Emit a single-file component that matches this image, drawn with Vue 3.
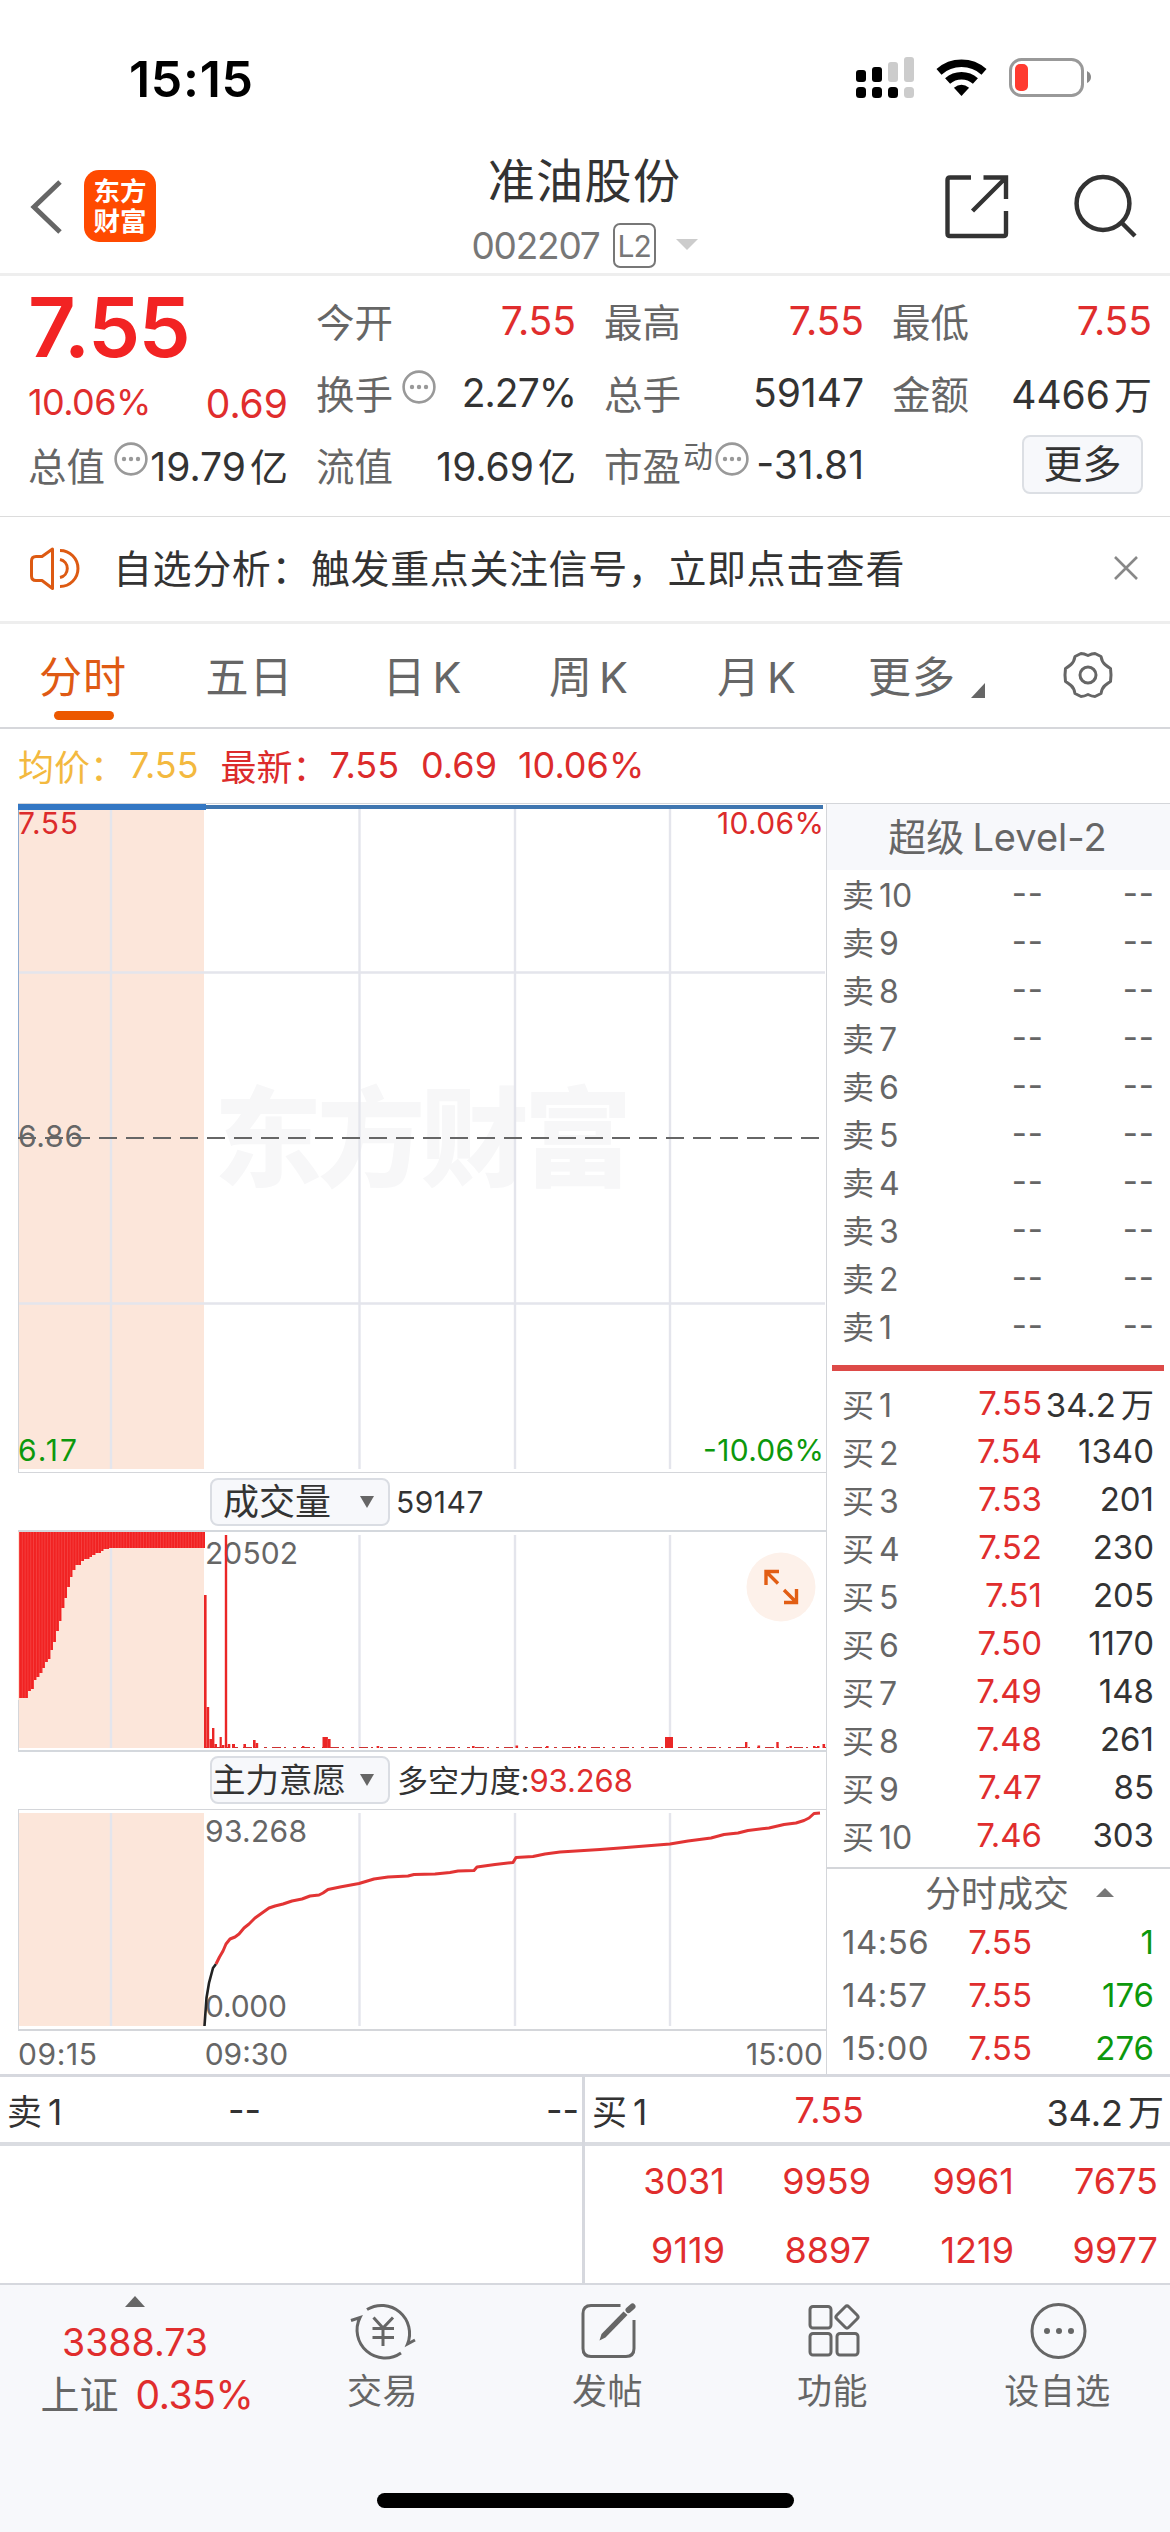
<template>
  <div class="page">
    <header class="status-bar">
      <span class="clock">15:15</span>
      <svg class="status-icons" width="240" height="50" viewBox="852 52 240 50">
        <g fill="#000">
          <rect x="856" y="70" width="10" height="12" rx="3" />
          <rect x="872" y="67" width="10" height="15" rx="3" />
          <rect x="856" y="87" width="10" height="11" rx="3.5" />
          <rect x="872" y="87" width="10" height="11" rx="3.5" />
          <rect x="888" y="87" width="10" height="11" rx="3.5" />
        </g>
        <g fill="#ccc">
          <rect x="888" y="62" width="10" height="20" rx="3" />
          <rect x="904" y="57" width="10" height="25" rx="3" />
          <rect x="904" y="87" width="10" height="11" rx="3.5" />
        </g>
        <g fill="none" stroke="#000" stroke-width="7.6">
          <path d="M939 71.8a34 34 0 0 1 45 0" />
          <path d="M947.6 81a21 21 0 0 1 27.8 0" />
        </g>
        <path d="M961.5 96l-7.6-8.2q7.6-6 15.2 0z" fill="#000" />
        <rect x="1010.5" y="59.5" width="72" height="36" rx="11" fill="none" stroke="#999" stroke-width="3" />
        <rect x="1015" y="64" width="13" height="27" rx="5" fill="#ff3b30" />
        <path d="M1087 71q4 2 4 6t-4 6z" fill="#888" />
      </svg>
    </header>

    <nav class="title-bar">
      <svg class="back" width="34" height="56" viewBox="0 0 34 56" fill="none" stroke="#666" stroke-width="5">
        <path d="M32 3L6 28l26 25" />
      </svg>
      <div class="logo"><span>东方</span><span>财富</span></div>
      <div class="title">
        <div class="stock-name">准油股份</div>
        <div class="stock-code">
          <span class="code">002207</span>
          <span class="level">L2</span>
          <svg width="22" height="12" viewBox="0 0 22 12"><path d="M0 0h22L11 11z" fill="#ccc" /></svg>
        </div>
      </div>
      <svg class="share" width="64" height="64" viewBox="0 0 64 64" fill="none" stroke="#333" stroke-width="4.4">
        <path d="M26 2.5H5Q2.5 2.5 2.5 5V58.5Q2.5 61 5 61H58.5Q61 61 61 58.5V36" />
        <path d="M38.5 2.5H61V24M61 2.5L27.500 36" />
      </svg>
      <svg class="search" width="66" height="66" viewBox="0 0 66 66" fill="none" stroke="#333" stroke-width="4.5">
        <circle cx="30" cy="29.5" r="26.4" />
        <path d="M48.5 48.5L62 62" />
      </svg>
    </nav>

    <section class="quote">
      <div class="quote-col">
        <div class="last-price">7.55</div>
        <div class="quote-row change"><span class="pct red">10.06%</span><span class="num red">0.69</span></div>
        <div class="quote-row">
          <span class="label">总值</span><DotsIcon class="dots" /><span class="num">19.79<i>亿</i></span>
        </div>
      </div>
      <div class="quote-col">
        <div class="quote-row"><span class="label">今开</span><span class="num red">7.55</span></div>
        <div class="quote-row"><span class="label">换手</span><DotsIcon class="dots" /><span class="num percent">2.27%</span></div>
        <div class="quote-row"><span class="label">流值</span><span class="num">19.69<i>亿</i></span></div>
      </div>
      <div class="quote-col">
        <div class="quote-row"><span class="label">最高</span><span class="num red">7.55</span></div>
        <div class="quote-row"><span class="label">总手</span><span class="num">59147</span></div>
        <div class="quote-row">
          <span class="label">市盈</span><span class="sup">动</span><DotsIcon class="dots tight" /><span class="num">-31.81</span>
        </div>
      </div>
      <div class="quote-col">
        <div class="quote-row"><span class="label">最低</span><span class="num red">7.55</span></div>
        <div class="quote-row"><span class="label">金额</span><span class="num">4466<i>万</i></span></div>
        <div class="quote-row end"><button class="more-btn">更多</button></div>
      </div>
    </section>

    <section class="notice">
      <svg width="54" height="46" viewBox="28 545 54 46" fill="none" stroke="#dd5a12" stroke-width="3">
        <path d="M52.5 549L42 556.5H36Q31.5 556.5 31.5 561V576Q31.5 580.5 36 580.5H42L52.5 588.5Z" stroke-linejoin="round" />
        <path d="M60 550.5a18 18 0 0 1 0 36M60 559.5a9.2 9.2 0 0 1 0 18" />
      </svg>
      <p>自选分析：触发重点关注信号，立即点击查看</p>
      <svg class="close" width="26" height="26" viewBox="0 0 26 26" stroke="#888" stroke-width="2.6">
        <path d="M2 2l22 22M24 2L2 24" />
      </svg>
    </section>

    <section class="tabs">
      <span v-for="t in tabs" :key="t" class="tab" :class="{ active: t === '分时' }">{{ t }}</span>
      <span class="tab more">更多<svg width="14" height="15" viewBox="0 0 14 15"><path d="M14 0v15H0z" fill="#666" /></svg></span>
      <span class="tab gear">
        <svg width="52" height="50" viewBox="-26 -25 52 50" fill="none" stroke="#666" stroke-width="3">
          <path d="M-7 -21.5Q-4 -21.5 0 -19.5Q4 -21.5 7 -21.5L13 -18.5Q14 -13 17 -10.5Q20 -8 22.5 -6.5Q23.500 0 22.5 6.5Q20 8 17 10.5Q14 13 13 18.5L7 21.5Q4 21.5 0 19.5Q-4 21.5 -7 21.5L-13 18.5Q-14 13 -17 10.5Q-20 8 -22.5 6.5Q-23.500 0 -22.5 -6.5Q-20 -8 -17 -10.5Q-14 -13 -13 -18.5Z" stroke-linejoin="round" />
          <circle r="8" />
        </svg>
      </span>
    </section>

    <section class="averages">
      <span class="avg">均价：</span><span class="avg v1">7.55</span>
      <span class="new">最新：</span><span class="v2">7.55</span><span class="v3">0.69</span><span>10.06%</span>
    </section>

    <main class="main">
      <div class="charts">
        <svg width="826" height="670" viewBox="0 803 826 670">
          <rect x="18" y="804" width="186" height="665" fill="#fce6da" />
          <text class="watermark" x="214" y="1178" textLength="418">东方财富</text>
          <g stroke="#e4e5ec" stroke-width="2.4">
            <path v-for="x in gridX" :key="x" :d="`M${x} 809V1469`" />
            <path d="M18 972.5H825M18 1303.5H825" />
          </g>
          <path d="M18 803.5H826M18 1472.5H826M18.5 1138V1472" stroke="#d4d6da" />
          <path d="M18.5 806V1138" stroke="#8fabd0" />
          <path d="M205 807H823" stroke="#3f76b0" stroke-width="4" />
          <path d="M18 807H206" stroke="#3377c4" stroke-width="6" />
          <path d="M18 1138H821" stroke="#666" stroke-width="2" stroke-dasharray="18 9" />
          <g class="axis">
            <text class="up" x="18" y="834" textLength="60">7.55</text>
            <text class="up" x="717" y="834" textLength="107">10.06%</text>
            <text x="18" y="1147" textLength="65">6.86</text>
            <text class="down" x="18" y="1461" textLength="59">6.17</text>
            <text class="down" x="703" y="1461" textLength="121">-10.06%</text>
          </g>
        </svg>

        <div class="sub-head">
          <button class="picker">成交量<i></i></button>
          <span class="sub-text wide">59147</span>
        </div>

        <svg width="826" height="222" viewBox="0 1530 826 222">
          <defs>
            <!-- hairline between neighbouring auction bars -->
            <pattern id="bars" x="19" width="2.82" height="10" patternUnits="userSpaceOnUse">
              <rect width="2.82" height="10" fill="#f12222" />
              <rect width="0.6" height="10" fill="#f65050" />
            </pattern>
          </defs>
          <rect x="18" y="1531" width="186" height="217" fill="#fce6da" />
          <g stroke="#e4e5ec" stroke-width="2.4">
            <path v-for="x in gridX" :key="x" :d="`M${x} 1535V1748`" />
          </g>
          <path :d="auctionPath" fill="url(#bars)" />
          <path d="M18 1531H826M18 1751H826" stroke="#d4d8dd" stroke-width="2" />
          <path d="M18.5 1700V1751" stroke="#d4d6da" />
          <path d="M206 1747.5H826" stroke="#c33" stroke-dasharray="3 5 9 3 2 7" />
          <g class="axis">
            <text x="205" y="1564" textLength="93">20502</text>
          </g>
          <rect v-for="(b, i) in volumes" :key="i" :x="b[0]" :y="b[2]" :width="b[1]" :height="1748 - b[2]" fill="#ea2626" />
          <circle cx="781" cy="1587" r="34.5" fill="#fdf1ea" />
          <path d="M779 1571.5H766V1585M767 1572.5L778 1583.5M784 1602.5H796.5V1589M796 1602L784 1590" fill="none" stroke="#e25e14" stroke-width="3.4" />
        </svg>

        <div class="sub-head second">
          <button class="picker narrow">主力意愿<i></i></button>
          <span class="sub-text">多空力度:<b>93.268</b></span>
        </div>

        <svg width="826" height="224" viewBox="0 1808 826 224">
          <rect x="18" y="1813" width="186" height="213" fill="#fce6da" />
          <g stroke="#e4e5ec" stroke-width="2.4">
            <path v-for="x in gridX" :key="x" :d="`M${x} 1813V2026`" />
          </g>
          <path d="M18 1809.5H826M18.5 1809V2030" stroke="#d4d6da" />
          <path d="M18 2030H826" stroke="#d4d6da" stroke-width="2" />
          <g class="axis">
            <text x="205" y="1842" textLength="102">93.268</text>
            <text x="205" y="2017" textLength="82">0.000</text>
          </g>
          <path d="M204.5 2026L206.5 1998L209 1983L213 1968L216 1964" fill="none" stroke="#222" stroke-width="2.6" />
          <polyline :points="forcePoints" fill="none" stroke="#e23434" stroke-width="3" stroke-linejoin="round" />
        </svg>

        <div class="time-axis"><span class="start">09:15</span><span class="open">09:30</span><span class="close-time">15:00</span></div>
      </div>

      <aside class="depth">
        <div class="depth-title">超级<span>Level-2</span></div>
        <div class="asks">
          <div v-for="n in 10" :key="n" class="depth-row">
            <span class="side">卖<em>{{ 11 - n }}</em></span><span class="dash">--</span><span class="dash vol">--</span>
          </div>
        </div>
        <div class="divider"></div>
        <div class="bids">
          <div v-for="(b, i) in bids" :key="i" class="depth-row">
            <span class="side">买<em>{{ i + 1 }}</em></span><span class="price">{{ b[0] }}</span><span class="vol">{{ b[1] }}<em v-if="b[2]">{{ b[2] }}</em></span>
          </div>
        </div>
        <div class="trades-title">分时成交<svg width="18" height="9" viewBox="0 0 18 9"><path d="M9 0l9 9H0z" fill="#777" /></svg></div>
        <div v-for="t in trades" :key="t[0]" class="trade">
          <span class="time">{{ t[0] }}</span><span class="price">{{ t[1] }}</span><span class="qty">{{ t[2] }}</span>
        </div>
      </aside>
    </main>

    <section class="queue">
      <div class="queue-side ask">
        <div class="queue-head"><span class="side">卖<em>1</em></span><span class="mid">--</span><span class="last">--</span></div>
      </div>
      <div class="queue-side bid">
        <div class="queue-head"><span class="side">买<em>1</em></span><span class="mid red">7.55</span><span class="last">34.2<em>万</em></span></div>
        <div v-for="(row, i) in queue" :key="i" class="queue-row">
          <span v-for="v in row" :key="v">{{ v }}</span>
        </div>
      </div>
    </section>

    <footer class="bottom-bar">
      <div class="items">
        <div class="index">
          <svg width="20" height="11" viewBox="0 0 20 11"><path d="M10 0l10 11H0z" fill="#666" /></svg>
          <div class="index-value">3388.73</div>
          <div class="index-name">上证<span>0.35%</span></div>
        </div>
        <div class="item">
          <svg width="70" height="62" viewBox="347 2300 70 62" fill="none" stroke="#666" stroke-width="3">
            <path d="M366 2309.5A28 28 0 0 1 406.5 2344L414 2340" />
            <path d="M350 2320.5L359 2317.5A28 28 0 0 0 400 2353" />
            <path d="M372.5 2317.5L382 2328L392 2317.5M371.5 2328.5H393M371.5 2337.5H393M382 2328V2346" />
          </svg>
          <span>交易</span>
        </div>
        <div class="item">
          <svg width="70" height="62" viewBox="572 2300 70 62" fill="none" stroke="#666" stroke-width="3">
            <path d="M619.5 2305.5H590Q582 2305.5 582 2313.5V2348.5Q582 2356.5 590 2356.5H625Q633 2356.5 633 2348.5V2320" />
            <path d="M598.5 2340.5L600.5 2334L622.5 2311.5L626.5 2315L604.5 2337.5Z" fill="#666" stroke="none" />
            <path d="M627.5 2310L631.5 2306.5" stroke-width="6" stroke-linecap="round" />
          </svg>
          <span>发帖</span>
        </div>
        <div class="item">
          <svg width="70" height="62" viewBox="797 2300 70 62" fill="none" stroke="#666" stroke-width="3">
            <rect x="809" y="2306.5" width="21" height="21.5" rx="3" />
            <rect x="809" y="2333.5" width="21" height="21.5" rx="3" />
            <rect x="836" y="2333.5" width="21" height="21.5" rx="3" />
            <rect x="837.5" y="2308.5" width="17" height="17" rx="2.5" transform="rotate(45 846 2317)" />
          </svg>
          <span>功能</span>
        </div>
        <div class="item">
          <svg width="70" height="62" viewBox="1021.5 2300 70 62" fill="none" stroke="#666" stroke-width="3">
            <circle cx="1057" cy="2331" r="26.5" />
            <g fill="#666" stroke="none">
              <circle cx="1045.5" cy="2331" r="3" /><circle cx="1057.5" cy="2331" r="3" /><circle cx="1069.5" cy="2331" r="3" />
            </g>
          </svg>
          <span>设自选</span>
        </div>
      </div>
      <div class="home-indicator"></div>
    </footer>
  </div>
</template>

<script setup>
import { computed, h } from 'vue'

const DotsIcon = () =>
  h('svg', { width: 34, height: 34, viewBox: '0 0 34 34', fill: '#999' }, [
    h('circle', { cx: 17, cy: 17, r: 15.4, fill: 'none', stroke: '#999', 'stroke-width': 2.6 }),
    h('circle', { cx: 10, cy: 17, r: 2.2 }),
    h('circle', { cx: 17, cy: 17, r: 2.2 }),
    h('circle', { cx: 24, cy: 17, r: 2.2 }),
  ])

const tabs = ['分时', '五日', '日 K', '周 K', '月 K']

const gridX = [111, 359.5, 515, 670]

const bids = [
  ['7.55', '34.2', '万'],
  ['7.54', '1340'],
  ['7.53', '201'],
  ['7.52', '230'],
  ['7.51', '205'],
  ['7.50', '1170'],
  ['7.49', '148'],
  ['7.48', '261'],
  ['7.47', '85'],
  ['7.46', '303'],
]

const trades = [
  ['14:56', '7.55', '1'],
  ['14:57', '7.55', '176'],
  ['15:00', '7.55', '276'],
]

const queue = [
  ['3031', '9959', '9961', '7675'],
  ['9119', '8897', '1219', '9977'],
]

// call auction bars hang from the top edge: [x end, bottom]
const auction = [
  [28, 1698], [31, 1691], [34, 1689], [36.5, 1680], [39.5, 1677], [42.5, 1673],
  [45, 1668], [48, 1662], [50.5, 1659], [53, 1650], [56, 1642], [59, 1631], [61.5, 1621],
  [64.5, 1608], [67, 1598], [70, 1587], [72.5, 1577], [75.5, 1570], [81, 1565], [84, 1561],
  [89.5, 1559], [92, 1557], [95.5, 1555], [101, 1553], [103.5, 1551], [109, 1549], [205, 1548],
]

const auctionPath = computed(() => {
  const steps = auction.map(([x, y]) => `V${y}H${x}`).join('')
  return `M19 1532${steps}V1532Z`
})

// [x, width, top]
const volumes = [
  [204, 2.6, 1595], [206.6, 2.6, 1707], [209.4, 2.6, 1739], [212, 2.4, 1728], [214.4, 2.6, 1744],
  [219.6, 2.2, 1737], [222, 2.4, 1745], [224.8, 2.4, 1535], [227.7, 2.6, 1744], [232, 3, 1744],
  [243.4, 2.6, 1744], [253, 2.6, 1740], [255.6, 2.6, 1743], [302, 2.4, 1746], [322.5, 5.4, 1737],
  [328, 2.6, 1739], [376.6, 2.6, 1746], [472, 2.6, 1746], [515.5, 2.6, 1745.5], [546, 2.6, 1746],
  [578, 2.4, 1746], [665, 8, 1737], [745, 2.4, 1742], [757.5, 2.6, 1745.5], [776.3, 2.4, 1742],
  [789.5, 2.4, 1746], [813, 2.5, 1746], [817, 2.5, 1746], [822.5, 2.6, 1744],
]

const force = [
  [216, 1964], [219.5, 1957], [223, 1951], [226, 1944], [230, 1939], [235, 1937], [239, 1934],
  [244, 1928], [249, 1924], [255, 1918], [262, 1913], [269, 1908], [275, 1906], [283, 1904],
  [292, 1901], [302, 1899], [310, 1896], [319, 1895], [323, 1893], [328, 1889.5], [340, 1887],
  [359, 1883.5], [374, 1879], [388, 1877], [408, 1876], [414, 1874.5], [435, 1874], [450, 1872.5],
  [458, 1871], [474, 1870.5], [477, 1867], [495, 1864.5], [513, 1862.5], [516, 1857.5], [533, 1856.5],
  [545, 1854], [560, 1852], [600, 1849.5], [620, 1848], [645, 1846], [670, 1844], [688, 1841],
  [711, 1838], [724, 1834.5], [738, 1833], [748, 1830.5], [769, 1828], [784, 1824.5], [796, 1823],
  [804, 1820.5], [809, 1818], [814, 1813.5], [820, 1813],
]
const forcePoints = computed(() => force.map((p) => p.join(',')).join(' '))
</script>

<style>
body {
  margin: 0;
  background: #fff;
}
</style>

<style scoped>
.page {
  width: 1170px;
  height: 2532px;
  background: #fff;
  color: #333;
  font-family: Inter, "Noto Sans CJK SC", sans-serif;
  font-size: 39px;
  overflow: hidden;
  display: flex;
  flex-direction: column;
}
.page * { box-sizing: border-box; }
svg { display: block; flex: none; }
i, em { font-style: normal; }
button { font-family: inherit; color: inherit; padding: 0; }
.red { color: #e02d2d !important; }

.status-bar {
  height: 140px;
  padding: 52px 78px 0 129px;
  display: flex;
  justify-content: space-between;
}
.clock {
  color: #000;
  font-size: 50px;
  font-weight: 600;
  line-height: 54px;
  letter-spacing: 0.7px;
}

.title-bar {
  height: 136px;
  border-bottom: 3px solid #eee;
  display: flex;
  align-items: flex-start;
}
.back { margin: 39px 0 0 28px; }
.logo {
  width: 72px;
  height: 72px;
  margin: 30px 0 0 22px;
  padding-top: 6px;
  border-radius: 15px;
  background: #ff4a00;
  color: #fff;
  font-size: 26.5px;
  font-weight: 700;
  line-height: 30px;
  text-align: center;
  display: flex;
  flex-direction: column;
}
.title {
  flex: 1;
  padding-left: 68px;
  padding-top: 11px;
  display: flex;
  flex-direction: column;
  align-items: center;
}
.stock-name { font-size: 47px; line-height: 60px; letter-spacing: 1.4px; }
.stock-code {
  height: 46px;
  margin-top: 11px;
  display: flex;
  align-items: center;
  color: #777;
}
.code { font-size: 37px; letter-spacing: -1.2px; margin-right: 13px; }
.level {
  width: 43px;
  height: 45px;
  border: 2px solid #777;
  border-radius: 7px;
  font-size: 30px;
  line-height: 42px;
  text-align: center;
  letter-spacing: -1px;
  margin-right: 20px;
}
.share { margin: 35px 0 0; }
.search { margin: 34px 31px 0 64px; }

.quote {
  height: 241px;
  padding: 8px 20px 0 28px;
  border-bottom: 1px solid #dcdcdc;
  display: grid;
  grid-template-columns: repeat(4, 258px);
  gap: 30px;
}
.quote-row {
  height: 72px;
  display: flex;
  align-items: center;
  white-space: nowrap;
}
.quote-row .label { color: #666; font-size: 38.5px; }
.quote-row .num { margin-left: auto; margin-right: -2px; }
.num i { margin-left: 4px; font-size: 38px; }
.num.percent { letter-spacing: -1px; }
.last-price {
  height: 80px;
  padding-top: 5px;
  color: #f22323;
  font-size: 83px;
  font-weight: 600;
  line-height: 76px;
  letter-spacing: -1.6px;
}
.change { height: 64px; padding-top: 14px; }
.pct { font-size: 36px; letter-spacing: -0.6px; margin-top: -3px; }
.dots { margin: -11px 0 0 9px; }
.dots.tight { margin-left: 2px; }
.sup { color: #666; font-size: 30px; margin: -21px 0 0 2px; }
.quote-row.end { justify-content: flex-end; padding-right: 7px; }
.more-btn {
  width: 121px;
  height: 59px;
  margin-top: 0;
  border: 2px solid #dcdfe4;
  border-radius: 8px;
  background: #f7f8fb;
  font-size: 39px;
  line-height: 54px;
}

.notice {
  height: 107px;
  padding: 0 31px 3px 28px;
  border-bottom: 3px solid #eee;
  display: flex;
  align-items: center;
}
.notice p { margin: -4px auto 0 31px; letter-spacing: 0.6px; }

.tabs {
  height: 105px;
  border-bottom: 2px solid #d6d7db;
  display: grid;
  grid-template-columns: 166px 167px 179px 154px 182px 157px 165px;
  color: #666;
  font-size: 43px;
}
.tab {
  height: 102px;
  padding-bottom: 3px;
  display: flex;
  align-items: center;
  justify-content: center;
  letter-spacing: 1px;
  word-spacing: -7px;
  white-space: nowrap;
  position: relative;
}
.tab.active { color: #df5a14; }
.tab.active::after {
  content: "";
  position: absolute;
  left: 54px;
  bottom: 6px;
  width: 60px;
  height: 9px;
  border-radius: 5px;
  background: #ec5800;
}
.tab.more svg { margin: 34px 0 0 15px; }
.tab.gear { padding-bottom: 0; }

.averages {
  height: 74px;
  padding: 0 0 2px 18px;
  display: flex;
  align-items: center;
  font-size: 36px;
  color: #dc2b2b;
  white-space: nowrap;
}
.avg { color: #f3b93f; }
.v1 { margin-right: 22px; margin-left: 3px; }
.v2 { margin-right: 22px; margin-left: 1px; }
.v3 { margin-right: 21px; }

.main { display: flex; height: 1271px; }
.charts { width: 826px; }
.watermark {
  font-size: 108px;
  font-weight: 900;
  fill: #f7f7f8;
}
.axis { font-size: 30px; fill: #666; }
.up { fill: #dc2b2b; }
.down { fill: #0c980c; }
.sub-head {
  height: 57px;
  padding-left: 210px;
  display: flex;
  align-items: center;
}
.sub-head.second { height: 56px; }
.picker {
  width: 180px;
  height: 48px;
  padding: 0 14px 0 11px;
  border: 2px solid #dadde3;
  border-radius: 8px;
  background: #f7f8fb;
  font-size: 36px;
  line-height: 44px;
  display: flex;
  justify-content: space-between;
  align-items: center;
  white-space: nowrap;
}
.picker.narrow { font-size: 33.5px; padding-left: 0; }
.picker i {
  border: 7px solid transparent;
  border-top: 12px solid #666;
  border-bottom: 0;
}
.sub-text { margin: -3px 0 0 7px; font-size: 31px; letter-spacing: -0.1px; }
.sub-text.wide { margin: 0 0 0 6px; font-size: 30px; letter-spacing: 0.5px; }
.sub-text b { color: #e02d2d; font-weight: 400; }
.time-axis {
  height: 42px;
  padding: 0 3px 0 18px;
  display: flex;
  font-size: 30px;
  line-height: 44px;
  color: #666;
}
.start { letter-spacing: 0.6px; }
.time-axis .open { margin-left: 107px; }
.close-time { margin-left: auto; }

.depth {
  width: 344px;
  border-left: 1px solid #d4d6da;
  border-top: 1px solid #d4d6da;
  font-size: 33px;
}
.depth-title {
  height: 66px;
  padding-right: 2px;
  background: #f7f8fb;
  color: #666;
  font-size: 38px;
  line-height: 66px;
  text-align: center;
  white-space: nowrap;
}
.depth-title span { margin-left: 8px; }
.asks { margin-top: -1px; }
.depth-row {
  height: 48px;
  padding: 0 16px 0 15px;
  display: grid;
  grid-template-columns: 70px 130px 1fr;
  align-items: center;
  text-align: right;
  white-space: nowrap;
}
.side { text-align: left; color: #666; font-size: 32px; }
.side em { margin-left: 5px; }
.dash { color: #666; letter-spacing: 1px; margin-right: -2px; }
.dash.vol { margin-right: -1px; }
.price { color: #e02d2d; }
.vol em { margin-left: 5px; }
.divider { height: 6px; margin: 16px 6px 0 5px; background: #dd4a48; }
.bids { padding: 8px 0; border-bottom: 2px solid #d4d6da; }
.trades-title {
  height: 46px;
  padding: 0 0 3px 98px;
  display: flex;
  align-items: center;
  color: #666;
  font-size: 36px;
}
.trades-title svg { margin: 3px 0 0 27px; }
.trade {
  height: 53px;
  padding: 0 16px 0 15px;
  display: grid;
  grid-template-columns: 100px 90px 1fr;
  align-items: center;
  text-align: right;
}
.time { text-align: left; color: #666; letter-spacing: 0.5px; }
.qty { color: #0c980c; }

.queue {
  height: 209px;
  border-top: 3px solid #d6d8de;
  display: flex;
  font-size: 36px;
}
.queue-side { width: 585px; }
.queue-side.ask { border-right: 3px solid #d6d8de; }
.queue-head {
  height: 69px;
  padding: 0 6px 0 7px;
  border-bottom: 4px solid #dadce1;
  display: grid;
  grid-template-columns: 70px 202px 1fr;
  align-items: center;
}
.ask .queue-head { grid-template-columns: 70px 184px 1fr; padding-right: 3px; }
.queue-head .side { color: #333; font-size: 35px; }
.queue-head .side em { margin-left: 6px; }
.mid { text-align: right; }
.last { text-align: right; }
.last em { margin-left: 5px; }
.queue-row {
  height: 69px;
  display: grid;
  grid-template-columns: 140px 146px 143px 144px;
  align-items: center;
  text-align: right;
  color: #e02d2d;
}

.bottom-bar {
  height: 249px;
  border-top: 2px solid #d6d8de;
  background: #f7f8fb;
}
.items { display: flex; height: 208px; color: #666; }
.index {
  width: 270px;
  padding-top: 11px;
  display: flex;
  flex-direction: column;
  align-items: center;
}
.index-value { margin-top: 11px; color: #e02d2d; font-size: 37.5px; line-height: 50px; }
.index-name {
  padding-left: 24px;
  line-height: 54px;
  white-space: nowrap;
}
.index-name span { margin-left: 17px; color: #e02d2d; letter-spacing: -0.4px; }
.item {
  width: 225px;
  padding-top: 15px;
  display: flex;
  flex-direction: column;
  align-items: center;
  font-size: 35px;
}
.item span { margin-top: 4px; line-height: 50px; letter-spacing: 0.5px; }
.home-indicator {
  width: 417px;
  height: 15px;
  margin: 0 auto;
  border-radius: 8px;
  background: #000;
}
</style>
